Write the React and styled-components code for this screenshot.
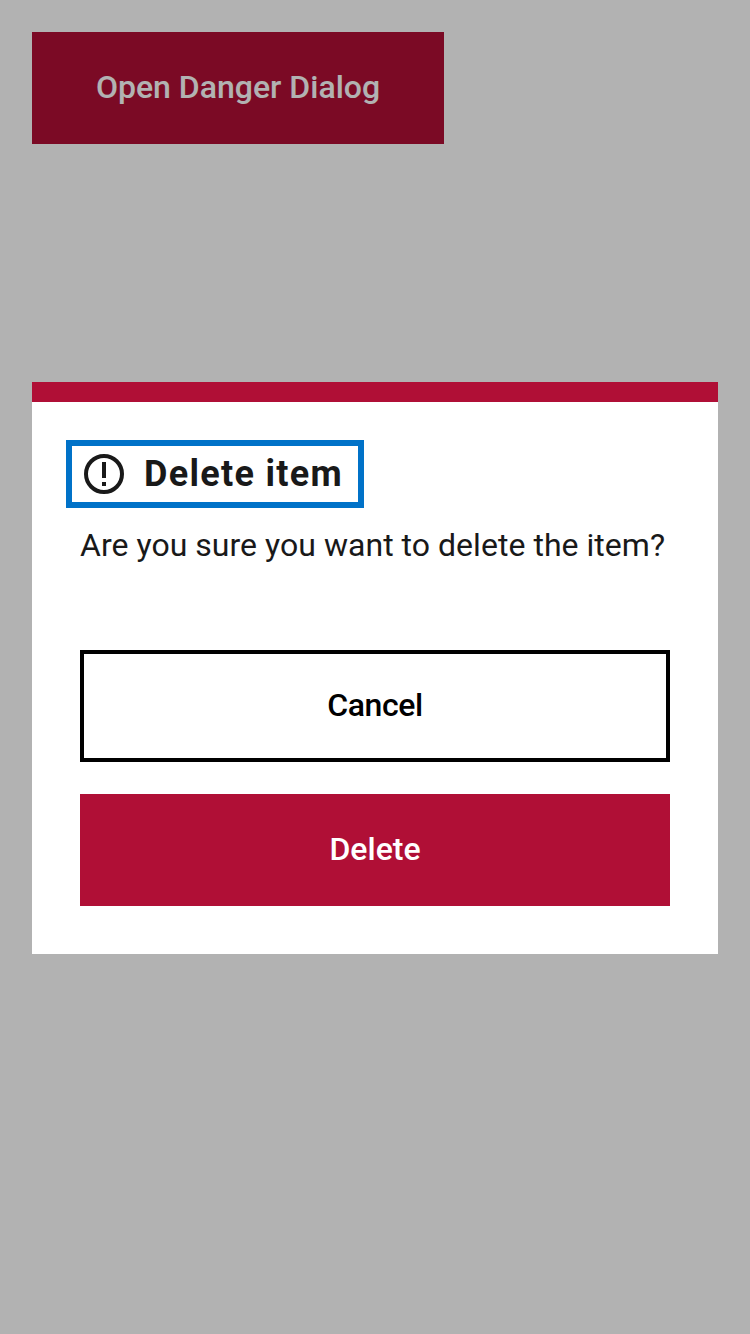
import React from 'react';
import styled, { createGlobalStyle } from 'styled-components';

const GlobalStyle = createGlobalStyle`
  * { box-sizing: border-box; }
  body {
    margin: 0;
    background: #fff;
    color: #191919;
    font-family: Roboto, "Liberation Sans", sans-serif;
  }
`;

const Page = styled.main`
  min-height: 100vh;
  padding: 32px;
`;

const Button = styled.button`
  display: ${(p) => (p.$block ? 'block' : 'inline-block')};
  width: ${(p) => (p.$block ? '100%' : '412px')};
  height: 112px;
  padding: 0 0 2px;
  border: 4px solid ${(p) => (p.$danger ? '#b00f36' : '#000')};
  border-radius: 0;
  background: ${(p) => (p.$danger ? '#b00f36' : '#fff')};
  color: ${(p) => (p.$danger ? '#fff' : '#000')};
  font: 500 32px/48px Roboto, "Liberation Sans", sans-serif;
  letter-spacing: ${(p) => p.$tracking || '0'};
  white-space: nowrap;
`;

const Backdrop = styled.div`
  position: fixed;
  inset: 0;
  display: flex;
  align-items: center;
  justify-content: center;
  padding: 0 32px;
  background: rgba(0, 0, 0, 0.3);
`;

const Dialog = styled.section`
  width: 100%;
  height: 572px;
  margin-top: 2px;
  padding: 38px 48px 48px;
  border-top: 20px solid #b00f36;
  background: #fff;
`;

const Heading = styled.h1`
  display: flex;
  align-items: center;
  gap: 20px;
  width: 298px;
  height: 68px;
  margin: 0 0 0 -14px;
  padding-left: 12px;
  border: 6px solid #0072c8;
  font-size: 36px;
  line-height: 48px;
  font-weight: 700;
  letter-spacing: 1.3px;
  white-space: nowrap;
`;

const Message = styled.p`
  margin: 13px 0 81px;
  font-size: 32px;
  line-height: 48px;
  letter-spacing: 0.03px;
  white-space: nowrap;
`;

const Actions = styled.div`
  display: flex;
  flex-direction: column;
  gap: 32px;
`;

const AlertIcon = () => (
  <svg width="40" height="40" viewBox="0 0 40 40" fill="none" aria-hidden="true">
    <circle cx="20" cy="20" r="18" stroke="#191919" strokeWidth="4" />
    <path d="M18 8h4v16h-4zM18 28h4v4h-4z" fill="#191919" />
  </svg>
);

export default function App() {
  return (
    <>
      <GlobalStyle />
      <Page>
        <Button $danger>Open Danger Dialog</Button>
      </Page>
      <Backdrop>
        <Dialog role="dialog" aria-modal="true" aria-labelledby="dialog-title">
          <Heading id="dialog-title">
            <AlertIcon />
            <span>Delete item</span>
          </Heading>
          <Message>Are you sure you want to delete the item?</Message>
          <Actions>
            <Button $block $tracking="-0.4px">Cancel</Button>
            <Button $block $danger>Delete</Button>
          </Actions>
        </Dialog>
      </Backdrop>
    </>
  );
}
